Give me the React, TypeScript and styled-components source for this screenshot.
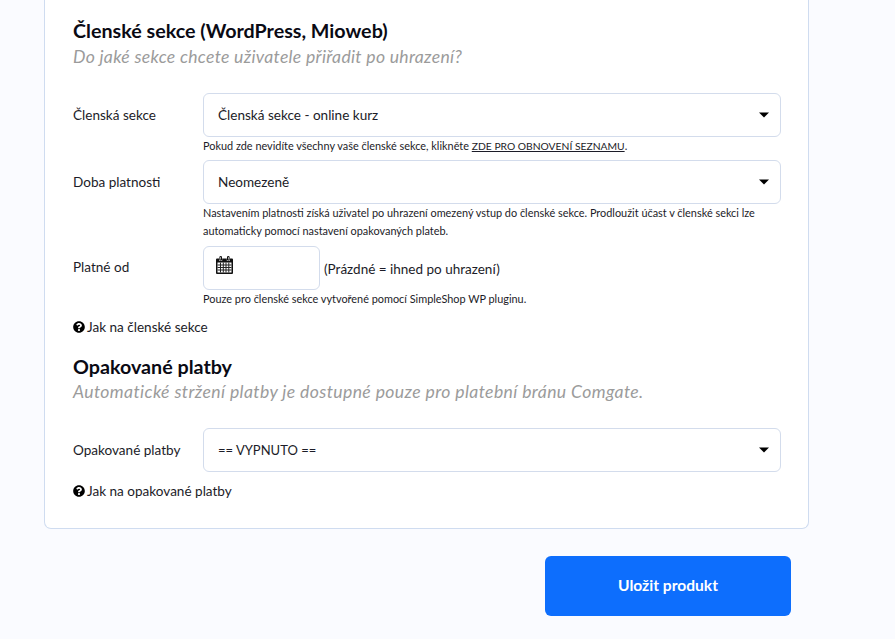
import * as React from 'react';
import styled, { createGlobalStyle } from 'styled-components';
import { FaQuestionCircle } from 'react-icons/fa';

const GlobalStyle = createGlobalStyle`
  html, body {
    margin: 0;
    padding: 0;
    height: 100%;
    overflow: hidden;
    background: #fafbff;
  }
  body {
    font-family: 'Lato', 'Noto Sans', sans-serif;
    color: #1c1c28;
  }
`;

function Caret() {
  return (
    <CaretIcon width="10" height="6" viewBox="0 0 10 6">
      <path d="M0 0.5h10L5 5.5z" fill="#000" />
    </CaretIcon>
  );
}

function CalendarIcon() {
  return (
    <svg width="17" height="18" viewBox="0 0 17 18">
      <path
        d="M1 2.5h2.2v2.2h3v-2.2h4.6v2.2h3v-2.2h2.2a1 1 0 0 1 1 1v13.5a1 1 0 0 1-1 1h-15a1 1 0 0 1-1-1v-13.5a1 1 0 0 1 1-1z"
        fill="#111"
      />
      <path d="M3.9 .6h1.6v3.4h-1.6zM11.5 .6h1.6v3.4h-1.6z" fill="none" stroke="#111" strokeWidth="1" />
      <path d="M1.5 6.5h14v10h-14z" fill="#fff" />
      <path
        d="M4.5 6.5v10M7.3 6.5v10M10 6.5v10M12.8 6.5v10M1.5 9h14M1.5 11.5h14M1.5 14h14"
        fill="none"
        stroke="#222"
        strokeWidth="1"
      />
    </svg>
  );
}

function Row({ label, children }: { label: string; children: React.ReactNode }) {
  return (
    <FormRow>
      <Label>{label}</Label>
      <Control>{children}</Control>
    </FormRow>
  );
}

export default function App() {
  return (
    <Page>
      <GlobalStyle />
      <Card>
        <Heading>Členské sekce (WordPress, Mioweb)</Heading>
        <SubHeading>Do jaké sekce chcete uživatele přiřadit po uhrazení?</SubHeading>

        <Fields>
          <Row label="Členská sekce">
            <Select>
              Členská sekce - online kurz
              <Caret />
            </Select>
            <Hint>
              Pokud zde nevidíte všechny vaše členské sekce, klikněte <HintLink>ZDE PRO OBNOVENÍ SEZNAMU</HintLink>.
            </Hint>
          </Row>
          <Row label="Doba platnosti">
            <Select>
              Neomezeně
              <Caret />
            </Select>
            <Hint>
              Nastavením platnosti získá uživatel po uhrazení omezený vstup do členské sekce. Prodloužit účast v členské
              sekci lze automaticky pomocí nastavení opakovaných plateb.
            </Hint>
          </Row>
          <Row label="Platné od">
            <DateLine>
              <DateInput>
                <CalendarIcon />
              </DateInput>
              <DateNote>(Prázdné = ihned po uhrazení)</DateNote>
            </DateLine>
            <Hint>Pouze pro členské sekce vytvořené pomocí SimpleShop WP pluginu.</Hint>
          </Row>
        </Fields>
        <HelpLink>
          <FaQuestionCircle size={12} color="#000" />
          Jak na členské sekce
        </HelpLink>

        <SecondHeading>Opakované platby</SecondHeading>
        <SecondSubHeading>Automatické stržení platby je dostupné pouze pro platební bránu Comgate.</SecondSubHeading>

        <Fields>
          <Row label="Opakované platby">
            <Select $caps>
              == VYPNUTO ==
              <Caret />
            </Select>
          </Row>
        </Fields>
        <HelpLink>
          <FaQuestionCircle size={12} color="#000" />
          Jak na opakované platby
        </HelpLink>
      </Card>
      <Actions>
        <SaveButton>Uložit produkt</SaveButton>
      </Actions>
    </Page>
  );
}

const Page = styled.div`
  width: 895px;
  height: 639px;
  padding-left: 44px;
  box-sizing: border-box;
`;

const Card = styled.div`
  width: 765px;
  height: 529px;
  box-sizing: border-box;
  padding: 20px 27px 0 28px;
  background: #fff;
  border: 1px solid #cfdcf0;
  border-top: none;
  border-radius: 0 0 7px 7px;
`;

const Heading = styled.h2`
  margin: 0;
  font-size: 19.7px;
  line-height: 22px;
  font-weight: 700;
  color: #0a0a14;
`;

const SecondHeading = styled(Heading)`
  margin-top: 20px;
`;

const SubHeading = styled.p`
  margin: 4px 0 0;
  font-size: 17.6px;
  letter-spacing: 0.3px;
  line-height: 22px;
  font-style: italic;
  color: #9b9b9b;
`;

const SecondSubHeading = styled(SubHeading)`
  margin-top: 3px;
  letter-spacing: 0.38px;
`;

const Fields = styled.div`
  display: flex;
  flex-direction: column;
  gap: 5px;
  margin-top: 25px;
`;

const FormRow = styled.div`
  display: flex;
  width: 708px;
`;

const Label = styled.div`
  width: 130px;
  flex: none;
  height: 44px;
  line-height: 44px;
  font-size: 13.55px;
`;

const Control = styled.div`
  flex: 1;
  min-width: 0;
`;

const Select = styled.div<{ $caps?: boolean }>`
  height: 44px;
  box-sizing: border-box;
  display: flex;
  align-items: center;
  justify-content: space-between;
  padding: 0 11px 0 14px;
  background: #fff;
  border: 1px solid #d3dcec;
  border-radius: 6px;
  font-size: ${({ $caps }) => ($caps ? '13px' : '13.55px')};
`;

const CaretIcon = styled.svg`
  flex: none;
`;

const Hint = styled.div`
  font-size: 10.9px;
  line-height: 18px;
  color: #1c1c28;
`;

const HintLink = styled.u`
  font-size: 10.3px;
`;

const DateLine = styled.div`
  display: flex;
  align-items: center;
  gap: 4px;
  margin-top: 1px;
`;

const DateInput = styled.div`
  width: 117px;
  height: 44px;
  box-sizing: border-box;
  display: flex;
  align-items: center;
  padding: 0 0 6px 12px;
  background: #fff;
  border: 1px solid #d3dcec;
  border-radius: 6px;
`;

const DateNote = styled.span`
  padding-top: 1px;
  font-size: 13.5px;
`;

const HelpLink = styled.div`
  display: flex;
  align-items: center;
  gap: 2px;
  margin-top: 10px;
  font-size: 13.55px;
  line-height: 18px;
`;

const Actions = styled.div`
  display: flex;
  justify-content: flex-end;
  width: 747px;
  margin-top: 27px;
`;

const SaveButton = styled.button`
  width: 246px;
  height: 60px;
  padding: 0 0 3px;
  border: none;
  border-radius: 6px;
  background: #0d6efd;
  color: #fff;
  font-family: inherit;
  font-size: 15.6px;
  font-weight: 700;
`;
